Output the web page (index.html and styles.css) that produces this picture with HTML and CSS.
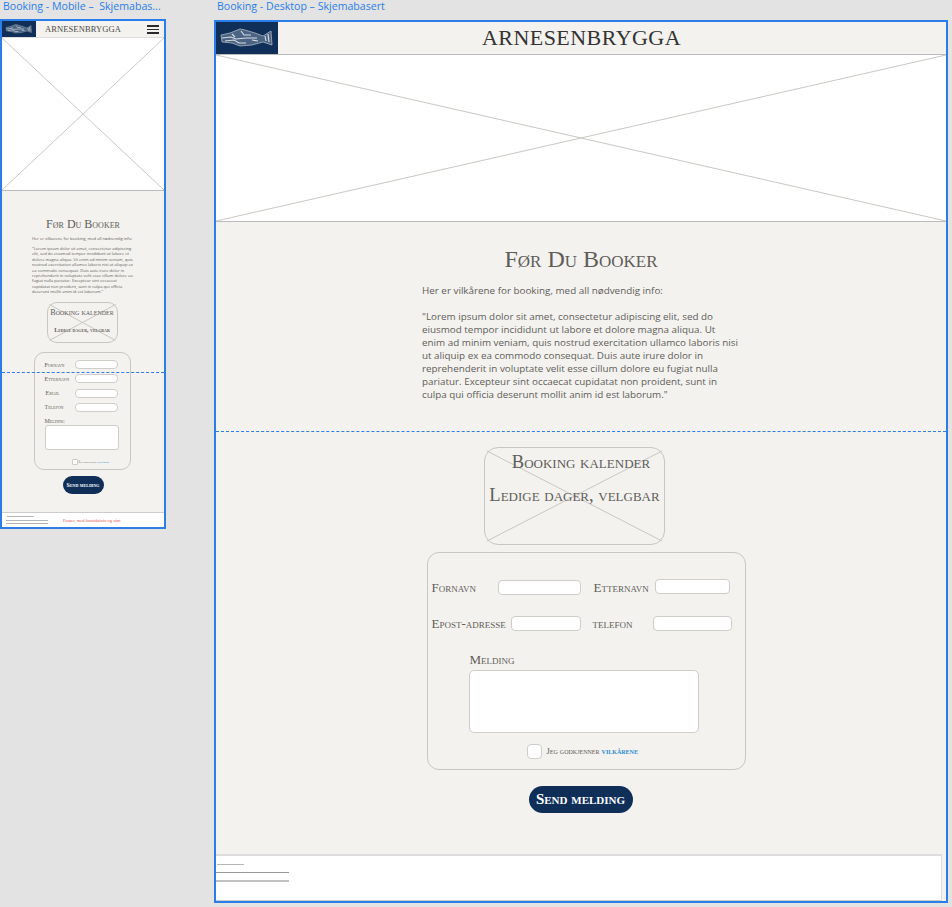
FILE: index.html
```html
<!DOCTYPE html>
<html>

<head>
    <meta charset="utf-8">
    <title>Booking</title>
    <link rel="stylesheet" href="styles.css">
</head>

<body>
    <svg class="defs" width="0" height="0">
        <symbol id="fish" viewBox="0 0 62 32">
            <path d="M5 13 L14 11 L24 7 L29 8 L39 11 L47 14 L55 9 L56 23 L47 20 L36 23 L24 24 L16 21 L6 20 Z" fill="#7f90a6" fill-opacity=".55" stroke="#aab5c3" stroke-width=".8" />
            <path d="M6 16 L15 15 L20 17 L30 16 L41 16 M9 19 L18 18 L23 21 L30 21 M16 12 L19 15 M25 9 L28 13 L35 13 M36 18 L42 19 M49 14 L50 19 M52 12 L53 20" fill="none" stroke="#d5dbe3" stroke-width="1.2" />
        </symbol>
    </svg>

    <div class="label label-mobile">Booking - Mobile – &nbsp;Skjemabas...</div>
    <div class="label label-desktop">Booking - Desktop – Skjemabasert</div>

    <section class="board mobile">
        <header class="top">
            <div class="logo"><svg><use href="#fish" /></svg></div>
            <div class="brand">ARNESENBRYGGA</div>
            <div class="burger"><span></span><span></span><span></span></div>
        </header>
        <div class="hero">
            <svg class="cross" preserveAspectRatio="none" viewBox="0 0 100 100">
                <line x1="0" y1="0" x2="100" y2="100" vector-effect="non-scaling-stroke" />
                <line x1="100" y1="0" x2="0" y2="100" vector-effect="non-scaling-stroke" />
            </svg>
        </div>
        <main class="content">
            <h1 class="title">Før Du Booker</h1>
            <div class="terms">
                <p>Her er vilkårene for booking, med all nødvendig info:</p>
                <p>"Lorem ipsum dolor sit amet, consectetur adipiscing elit, sed do eiusmod tempor incididunt ut labore et dolore magna aliqua. Ut enim ad minim veniam, quis nostrud exercitation ullamco laboris nisi ut aliquip ex ea commodo consequat. Duis aute irure dolor in reprehenderit in voluptate velit esse cillum dolore eu fugiat nulla pariatur. Excepteur sint occaecat cupidatat non proident, sunt in culpa qui officia deserunt mollit anim id est laborum."</p>
            </div>
            <div class="calendar">
                <svg class="cross" preserveAspectRatio="none" viewBox="0 0 100 100">
                    <line x1="2" y1="4" x2="98" y2="96" vector-effect="non-scaling-stroke" />
                    <line x1="98" y1="4" x2="2" y2="96" vector-effect="non-scaling-stroke" />
                </svg>
                <div class="cal-one">Booking kalender</div>
                <div class="cal-two">Ledige dager, velgbar</div>
            </div>
            <form class="form">
                <div class="m-row"><label>Fornavn</label><span class="input"></span></div>
                <div class="m-row"><label>Etternavn</label><span class="input"></span></div>
                <div class="m-row"><label class="indent">Email</label><span class="input"></span></div>
                <div class="m-row"><label>Telefon</label><span class="input"></span></div>
                <label class="m-msg">Melding</label>
                <span class="input area"></span>
                <div class="consent"><span class="check"></span><span>Jeg godkjenner <a>vilkårene</a></span></div>
            </form>
            <div class="send">Send melding</div>
        </main>
        <footer class="foot">
            <div class="foot-lines"><i></i><i></i><i></i></div>
            <div class="foot-note">Footer, med kontaktinfo og sånt</div>
        </footer>
        <div class="fold"></div>
    </section>

    <section class="board desktop">
        <header class="top">
            <div class="logo"><svg><use href="#fish" /></svg></div>
            <div class="brand">ARNESENBRYGGA</div>
        </header>
        <div class="hero">
            <svg class="cross" preserveAspectRatio="none" viewBox="0 0 100 100">
                <line x1="0" y1="0" x2="100" y2="100" vector-effect="non-scaling-stroke" />
                <line x1="100" y1="0" x2="0" y2="100" vector-effect="non-scaling-stroke" />
            </svg>
        </div>
        <main class="content">
            <h1 class="title">Før Du Booker</h1>
            <div class="terms">
                <p>Her er vilkårene for booking, med all nødvendig info:</p>
                <p>"Lorem ipsum dolor sit amet, consectetur adipiscing elit, sed do eiusmod tempor incididunt ut labore et dolore magna aliqua. Ut<br>enim ad minim veniam, quis nostrud exercitation ullamco laboris nisi ut aliquip ex ea commodo consequat. Duis aute irure dolor in reprehenderit in voluptate velit esse cillum dolore eu fugiat nulla pariatur. Excepteur sint occaecat cupidatat non proident, sunt in culpa qui officia deserunt mollit anim id est laborum."</p>
            </div>
            <div class="calendar">
                <svg class="cross" preserveAspectRatio="none" viewBox="0 0 100 100">
                    <line x1="1" y1="3" x2="99" y2="97" vector-effect="non-scaling-stroke" />
                    <line x1="99" y1="3" x2="1" y2="97" vector-effect="non-scaling-stroke" />
                </svg>
                <div class="cal-one">Booking kalender</div>
                <div class="cal-two">Ledige dager, velgbar</div>
            </div>
            <form class="form">
                <div class="d-row first">
                    <label class="l-fornavn">Fornavn</label><span class="input i-fornavn"></span>
                    <label class="l-etternavn">Etternavn</label><span class="input i-etternavn"></span>
                </div>
                <div class="d-row">
                    <label class="l-epost">Epost-adresse</label><span class="input i-epost"></span>
                    <label class="l-telefon">telefon</label><span class="input i-telefon"></span>
                </div>
                <label class="d-msg">Melding</label>
                <span class="input area"></span>
                <div class="consent"><span class="check"></span><span>Jeg godkjenner <a>vilkårene</a></span></div>
            </form>
            <div class="send">Send melding</div>
        </main>
        <footer class="foot">
            <div class="foot-lines"><i></i><i></i><i></i></div>
        </footer>
        <div class="fold"></div>
    </section>
</body>

</html>
```

FILE: styles.css
```css
* {
    box-sizing: border-box;
}

html,
body {
    margin: 0;
    height: 907px;
    overflow: hidden;
    background-color: #e3e3e3;
}

body {
    position: relative;
    font-family: "Liberation Serif", serif;
    color: #5f5d59;
}

.defs {
    position: absolute;
}

.label {
    position: absolute;
    top: 0;
    font-family: "Open Sans", sans-serif;
    font-size: 10.6px;
    line-height: 13px;
    color: #2b7de9;
    white-space: nowrap;
}

.label-mobile {
    left: 3px;
}

.label-desktop {
    left: 217px;
}

/* artboards sit on a free canvas */
.board {
    position: absolute;
    display: flex;
    flex-direction: column;
    border: 2px solid #2b7de9;
    background-color: #f3f2ee;
}

.mobile {
    left: 0;
    top: 19px;
    width: 166px;
    height: 510px;
}

.desktop {
    left: 214px;
    top: 20px;
    width: 734px;
    height: 883px;
}

.top {
    display: flex;
    align-items: center;
    position: relative;
    flex: none;
}

.logo {
    background-color: #0f2f59;
    flex: none;
}

.logo svg {
    display: block;
    width: 100%;
    height: 100%;
}

.brand {
    color: #333;
    white-space: nowrap;
}

.hero {
    background-color: #fff;
    flex: none;
    border-top: 1px solid #bbb;
    border-bottom: 1px solid #bbb;
}

.cross {
    display: block;
    width: 100%;
    height: 100%;
}

.cross line {
    stroke: #c9c7c2;
    stroke-width: 1;
}

.content {
    flex: 1;
    display: flex;
    flex-direction: column;
    align-items: center;
    min-height: 0;
}

.title {
    margin: 0;
    font-weight: normal;
    font-variant: small-caps;
    white-space: nowrap;
}

.terms {
    font-family: "Open Sans", sans-serif;
    color: #5f5d5a;
}

.terms p {
    margin: 0;
}

.calendar {
    position: relative;
    border: 1px solid #c9c7c2;
    text-align: center;
    font-variant: small-caps;
    color: #5f5d59;
    flex: none;
    white-space: nowrap;
}

.calendar .cross {
    position: absolute;
    left: 0;
    top: 0;
}

.cal-one,
.cal-two {
    position: relative;
}

.form {
    border: 1px solid #c9c7c2;
    display: flex;
    flex-direction: column;
    flex: none;
    font-variant: small-caps;
}

.input {
    display: block;
    background-color: #fff;
    border: 1px solid #cfcdc8;
    flex: none;
}

.check {
    display: block;
    background-color: #fff;
    border: 1px solid #cfcdc8;
    flex: none;
}

.consent {
    display: flex;
    align-items: center;
    white-space: nowrap;
}

.consent a {
    color: #2a8bd0;
    font-weight: bold;
}

.send {
    background-color: #0f2f59;
    color: #fff;
    font-variant: small-caps;
    font-weight: bold;
    text-align: center;
    flex: none;
    white-space: nowrap;
}

.foot {
    flex: none;
    background-color: #fff;
    display: flex;
}

.foot-lines {
    display: flex;
    flex-direction: column;
}

.foot-lines i {
    display: block;
    background-color: #b5b5b5;
    height: 1px;
}

/* fold marker, lies over the page */
.fold {
    position: absolute;
    left: 0;
    right: 0;
    border-top: 1px dashed #2b7de9;
}

/* mobile */
.mobile .top {
    height: 16px;
}

.mobile .logo {
    width: 34px;
    height: 16px;
}

.mobile .brand {
    margin-left: 9px;
    font-size: 8.5px;
    letter-spacing: .1px;
    color: #4c4a47;
}

.burger {
    position: absolute;
    right: 5px;
    top: 4px;
    width: 12px;
    display: flex;
    flex-direction: column;
    gap: 2px;
}

.burger span {
    display: block;
    height: 1.5px;
    background-color: #2a2a2a;
}

.mobile .hero {
    height: 154px;
    border-top-color: #ddd;
}

.mobile .title {
    margin-top: 26px;
    font-size: 12px;
    line-height: 15px;
}

.mobile .terms {
    margin-top: 4px;
    width: 102px;
    font-size: 4.1px;
    line-height: 5.4px;
}

.mobile .terms p+p {
    margin-top: 4.5px;
}

.mobile .calendar {
    margin-top: 7px;
    margin-left: -2px;
    width: 71px;
    height: 41px;
    border-radius: 10px;
    font-size: 8.2px;
}

.mobile .cal-one {
    margin-top: 5px;
}

.mobile .cal-two {
    margin-top: 10px;
    font-size: 6px;
    font-weight: bold;
}

.mobile .form {
    margin-top: 9px;
    margin-left: -2px;
    width: 97px;
    height: 118px;
    border-radius: 10px;
    padding: 7px 12px 0 10px;
    font-size: 6px;
}

.m-row {
    display: flex;
    align-items: center;
    justify-content: space-between;
    height: 10px;
    margin-bottom: 4.3px;
}

.m-row .input {
    width: 43px;
    height: 9px;
    border-radius: 4px;
}

.indent {
    margin-left: 1px;
}

.m-msg {
    margin-top: 1px;
    line-height: 6px;
}

.mobile .area {
    margin-top: 1px;
    width: 74px;
    height: 25px;
    border-radius: 3px;
}

.mobile .consent {
    margin-top: 9px;
    margin-left: 27px;
    font-size: 3.1px;
    gap: 1px;
    color: #444;
}

.mobile .check {
    width: 6px;
    height: 6px;
    border-radius: 1px;
}

.mobile .send {
    margin-top: 6px;
    width: 41px;
    height: 18px;
    border-radius: 9px;
    font-size: 6px;
    line-height: 18px;
}

.mobile .foot {
    height: 15px;
    align-items: center;
    padding-left: 4px;
    border-top: 1px solid #ccc;
}

.mobile .foot-lines {
    gap: 2.5px;
    width: 42px;
}

.mobile .foot-lines i:first-child {
    width: 27px;
    margin-left: 1px;
}

.foot-note {
    margin-left: 15px;
    color: #e2564f;
    font-size: 4.5px;
    white-space: nowrap;
}

.mobile .fold {
    top: 351px;
}

/* desktop */
.desktop .top {
    height: 32px;
}

.desktop .logo {
    width: 62px;
    height: 32px;
}

.desktop .brand {
    margin-left: 204px;
    font-size: 22px;
    letter-spacing: .45px;
}

.desktop .hero {
    height: 168px;
}

.desktop .title {
    margin-top: 23px;
    font-size: 24px;
    line-height: 28px;
}

.desktop .terms {
    margin-top: 11px;
    width: 320px;
    margin-left: 2px;
    font-size: 9.85px;
    line-height: 13px;
}

.desktop .terms p+p {
    margin-top: 13px;
}

.desktop .calendar {
    margin-top: 46px;
    margin-left: -13px;
    width: 181px;
    height: 98px;
    border-radius: 14px;
    font-size: 18.5px;
    line-height: 20px;
}

.desktop .cal-one {
    margin-top: 4px;
    padding-left: 13px;
}

.desktop .cal-two {
    margin-top: 13px;
}

.desktop .form {
    margin-top: 7px;
    margin-left: 10px;
    width: 319px;
    height: 218px;
    border-radius: 12px;
    padding-left: 4px;
    font-size: 13px;
}

.d-row {
    display: flex;
    align-items: center;
    height: 15px;
    margin-top: 21px;
}

.d-row.first {
    margin-top: 27px;
}

.d-row .input {
    height: 15px;
    border-radius: 4px;
}

.l-fornavn {
    width: 66px;
}

.i-fornavn {
    width: 83px;
}

.l-etternavn {
    margin-left: 13px;
    width: 61px;
}

.d-row .i-etternavn {
    width: 75px;
    margin-bottom: 2px;
}

.l-epost {
    width: 79px;
}

.i-epost {
    width: 70px;
}

.l-telefon {
    margin-left: 12px;
    width: 60px;
}

.i-telefon {
    width: 79px;
}

.d-msg {
    margin-top: 21px;
    margin-left: 38px;
    line-height: 15px;
}

.desktop .area {
    margin-top: 3px;
    margin-left: 37px;
    width: 230px;
    height: 63px;
    border-radius: 5px;
}

.desktop .consent {
    margin-top: 11px;
    margin-left: 95px;
    font-size: 8.3px;
    gap: 5px;
}

.desktop .check {
    width: 15px;
    height: 15px;
    border-radius: 4px;
}

.desktop .send {
    margin-top: 16px;
    margin-left: -1px;
    width: 104px;
    height: 27px;
    border-radius: 14px;
    font-size: 15px;
    line-height: 27px;
}

.desktop .foot {
    height: 47px;
    margin-right: 4px;
    flex-direction: column;
    border-top: 2px solid #ddd;
    border-right: 1px solid #ddd;
    border-bottom: 1px solid #ccc;
}

.desktop .foot-lines {
    margin-top: 8px;
    gap: 7px;
    width: 73px;
}

.desktop .foot-lines i:first-child {
    width: 27px;
    margin-left: 1px;
}

.desktop .foot-lines i:nth-child(2) {
    background-color: #999;
}

.desktop .foot-lines i:nth-child(3) {
    background-color: #c0c0c0;
    height: 2px;
}

.desktop .fold {
    top: 409px;
}
```
